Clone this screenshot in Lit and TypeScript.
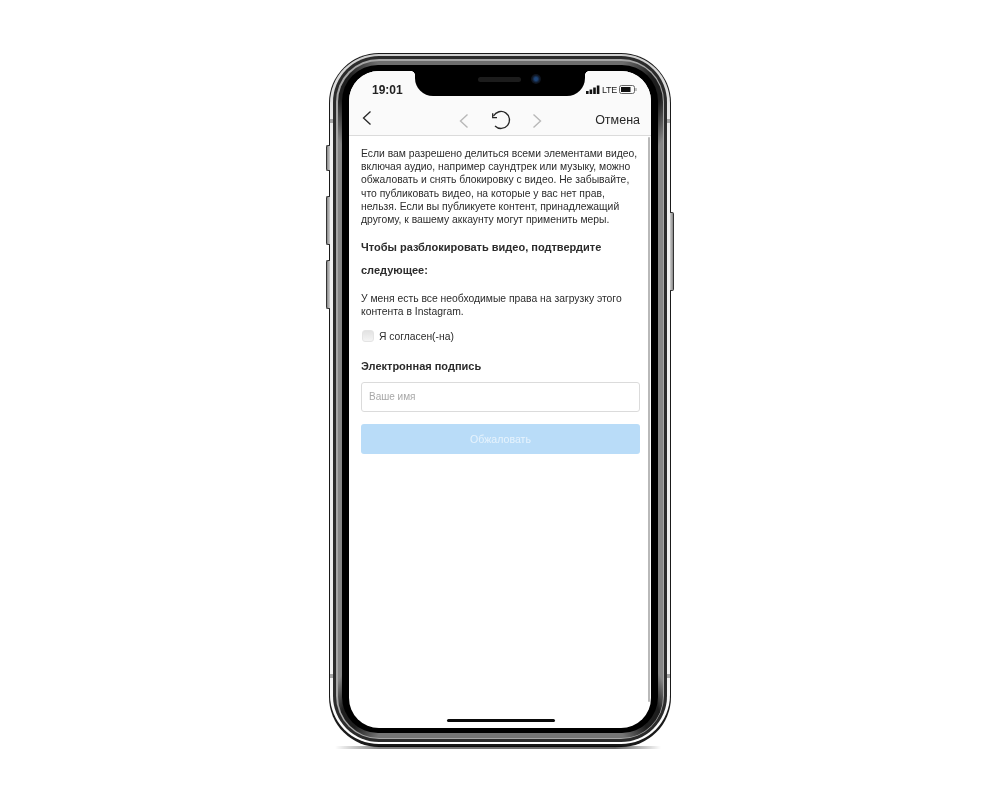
import { LitElement, html, css } from "lit";
import { customElement } from "lit/decorators.js";

@customElement("app-root")
export class AppRoot extends LitElement {
  static styles = css`
    :host { display: flex; width: 1000px; height: 800px; align-items: center; justify-content: center; background: #fff; font-family: "Liberation Sans", Arial, sans-serif; color: #2b2b2b; }
    .phone { position: relative; width: 342px; height: 694px; box-sizing: border-box; }
    .shadow { position: absolute; left: 6px; right: 10px; bottom: -2px; height: 3px; background: linear-gradient(90deg, rgba(0,0,0,0), rgba(0,0,0,.5) 14%, rgba(0,0,0,.6) 86%, rgba(0,0,0,0)); }
    .btn { position: absolute; background: linear-gradient(90deg, #888, #ccc); border: 1px solid #333; border-right: none; box-sizing: border-box; border-radius: 2px 0 0 2px; }
    .b1 { left: -3px; top: 92px; width: 4px; height: 26px; }
    .b2 { left: -3px; top: 143px; width: 4px; height: 49px; }
    .b3 { left: -3px; top: 207px; width: 4px; height: 49px; }
    .b4 { right: -3px; top: 159px; width: 4px; height: 79px; border: 1px solid #333; border-left: none; border-radius: 0 2px 2px 0; background: linear-gradient(90deg, #ccc, #888); }
    .band { position: absolute; width: 3px; height: 4px; background: #a5a5a5; }
    .bl { left: 1px; } .br { right: 1px; }
    .bt { top: 66px; } .bb { top: 621px; }
    .r { box-sizing: border-box; height: 100%; display: flex; flex-direction: column; }
    .r1 { background: #1a1a1a; border-radius: 50px; padding: 1px 1px 3px; }
    .r2 { background: linear-gradient(#cfcfcf, #f2f2f2 12%, #ededed 85%, #fff); border-radius: 49px; padding: 2px 3px; }
    .r3 { background: #2b2b2b; border-radius: 46px; padding: 3px; }
    .r4 { background: #a6a6a6; border-radius: 43px; padding: 1.5px; }
    .r4b { background: conic-gradient(#6e6e6e 0deg, #6e6e6e 20deg, #1e1e1e 25deg, #1e1e1e 28deg, #868686 32deg, #868686 150deg, #1e1e1e 153deg, #1e1e1e 156deg, #757575 160deg, #757575 200deg, #1e1e1e 204deg, #1e1e1e 207deg, #868686 210deg, #868686 328deg, #1e1e1e 332deg, #1e1e1e 335deg, #6e6e6e 340deg); border-radius: 41px; padding: 4.5px; }
    .r5 { background: #000; border-radius: 36px; padding: 6px 7px 5px; }
    .screen { position: relative; flex: 1; min-height: 0; background: #fff; border-radius: 30px; overflow: hidden; display: flex; flex-direction: column; }
    .head { background: #fafafa; border-bottom: 1px solid #dbdbdb; height: 65px; box-sizing: border-box; flex: none; display: flex; flex-direction: column; filter: blur(.4px); }
    .status { height: 25px; padding-top: 6px; flex: none; display: flex; justify-content: space-between; align-items: center; padding-left: 23px; padding-right: 14px; }
    .time { font-size: 12px; font-weight: 700; color: #222; }
    .sys { display: flex; align-items: center; gap: 2px; font-size: 9px; letter-spacing: -.3px; color: #222; }
    .sys svg:first-child { margin-right: 0; }
    .notch { position: absolute; left: 66px; top: 0; width: 170px; height: 25px; background: #000; border-radius: 0 0 18px 18px; }
    .notch::before, .notch::after { content: ""; position: absolute; top: 0; width: 5px; height: 5px; }
    .notch::before { left: -5px; background: radial-gradient(circle at 0 100%, transparent 5px, #000 5.5px); }
    .notch::after { right: -5px; background: radial-gradient(circle at 100% 100%, transparent 5px, #000 5.5px); }
    .speaker { position: absolute; left: 63px; top: 6px; width: 43px; height: 5px; border-radius: 3px; background: #1c1c1c; }
    .camera { position: absolute; left: 116px; top: 3px; width: 10px; height: 10px; border-radius: 50%; background: radial-gradient(circle, #1d4478 0 20%, #0f1622 55%, #0a0a0e); }
    .nav { flex: 1; display: flex; align-items: center; padding: 0 11px 0 13px; justify-content: space-between; position: relative; }
    .nav svg { display: block; }
    .back { margin-bottom: 1px; }
    .dim { margin-top: 4px; }
    .spin { margin-top: 2px; }
    .mid { position: absolute; left: 110px; top: 0; bottom: 0; width: 83px; display: flex; align-items: center; justify-content: space-between; }
    .cancel { font-size: 12.5px; color: #262626; margin-top: 3px; }
    .body { position: relative; flex: 1; padding: 11px 11px 0 12px; box-sizing: border-box; filter: blur(.4px); }
    .bar { position: absolute; right: 1px; top: 1px; bottom: 26px; width: 2.5px; background: #b9b9b9; border-radius: 1px; }
    p { margin: 0; font-size: 10.35px; line-height: 13.2px; }
    h3 { margin: 0; font-size: 11px; line-height: 23px; font-weight: 700; }
    .h1 { margin-top: 9.5px; }
    .p2 { margin-top: 10px; }
    .check { display: flex; align-items: center; gap: 5px; margin-top: 11px; margin-left: 1px; font-size: 10.3px; height: 14px; }
    .box { width: 12px; height: 12px; border-radius: 3px; background: linear-gradient(#e2e2e2, #f4f4f4); border: 1px solid #e4e4e4; box-sizing: border-box; }
    .h2 { margin-top: 11.5px; }
    .input { margin-top: 4.5px; height: 29.5px; box-sizing: border-box; border: 1px solid #dbdbdb; border-radius: 3px; background: #fff; padding: 0 7px; display: flex; align-items: center; font-size: 10px; color: #a8a8a8; }
    .submit { margin-top: 12px; height: 30px; border-radius: 3px; background: #b9dcf8; color: #e6f3fd; font-size: 10.6px; display: flex; align-items: center; justify-content: center; }
    .home { position: absolute; left: 98px; bottom: 6px; width: 108px; height: 3px; border-radius: 2px; background: #0a0a0a; }
  `;

  render() {
    return html`
      <div class="phone">
        <div class="shadow"></div>
        <div class="btn b1"></div><div class="btn b2"></div><div class="btn b3"></div><div class="btn b4"></div>
        <div class="r r1"><div class="r r2"><div class="r r3"><div class="r r4"><div class="r r4b"><div class="r r5">
          <div class="screen">
            <div class="head">
              <div class="status">
                <span class="time">19:01</span>
                <span class="sys">
                  <svg width="14" height="9" viewBox="0 0 14 9"><rect x="0" y="6" width="2.6" height="3" fill="#111"/><rect x="3.6" y="4.5" width="2.6" height="4.5" fill="#111"/><rect x="7.2" y="2.5" width="2.6" height="6.5" fill="#111"/><rect x="10.8" y="0.5" width="2.6" height="8.5" fill="#111"/></svg>
                  <span>LTE</span>
                  <svg width="18" height="9" viewBox="0 0 18 9"><rect x=".5" y=".5" width="15" height="8" rx="2" fill="none" stroke="#666"/><rect x="2" y="2" width="9.5" height="5" fill="#111"/><rect x="16.5" y="3" width="1" height="3" fill="#888"/></svg>
                </span>
              </div>
              <div class="nav">
                <svg class="back" width="10" height="16" viewBox="0 0 10 16"><path d="M8.5 1.5 1.5 8l7 6.5" fill="none" stroke="#262626" stroke-width="1.3"/></svg>
                <div class="mid">
                  <svg class="dim" width="10" height="16" viewBox="0 0 10 16"><path d="M8.5 1.5 1.5 8l7 6.5" fill="none" stroke="#b8b8b8" stroke-width="1.4"/></svg>
                  <svg class="spin" width="20" height="20" viewBox="0 0 20 20"><path d="M2.5 6A8.5 8.5 0 1 1 4 16" fill="none" stroke="#262626" stroke-width="1.3"/><path d="M1.7 3.3V7.7H6" fill="none" stroke="#262626" stroke-width="1.3"/></svg>
                  <svg class="dim" width="10" height="16" viewBox="0 0 10 16"><path d="M1.5 1.5 8.5 8l-7 6.5" fill="none" stroke="#b8b8b8" stroke-width="1.4"/></svg>
                </div>
                <span class="cancel">Отмена</span>
              </div>
            </div>
            <div class="body">
              <div class="bar"></div>
              <p>Если вам разрешено делиться всеми элементами видео, включая аудио, например саундтрек или музыку, можно обжаловать и снять блокировку с видео. Не забывайте, что публиковать видео, на которые у вас нет прав, нельзя. Если вы публикуете контент, принадлежащий другому, к вашему аккаунту могут применить меры.</p>
              <h3 class="h1">Чтобы разблокировать видео, подтвердите следующее:</h3>
              <p class="p2">У меня есть все необходимые права на загрузку этого контента в Instagram.</p>
              <div class="check"><span class="box"></span><span>Я согласен(-на)</span></div>
              <h3 class="h2">Электронная подпись</h3>
              <div class="input">Ваше имя</div>
              <div class="submit">Обжаловать</div>
            </div>
            <div class="home"></div>
            <div class="notch"><div class="speaker"></div><div class="camera"></div></div>
          </div>
        </div></div></div></div></div></div>
        <div class="band bl bt"></div><div class="band br bt"></div><div class="band bl bb"></div><div class="band br bb"></div>
      </div>
    `;
  }
}
